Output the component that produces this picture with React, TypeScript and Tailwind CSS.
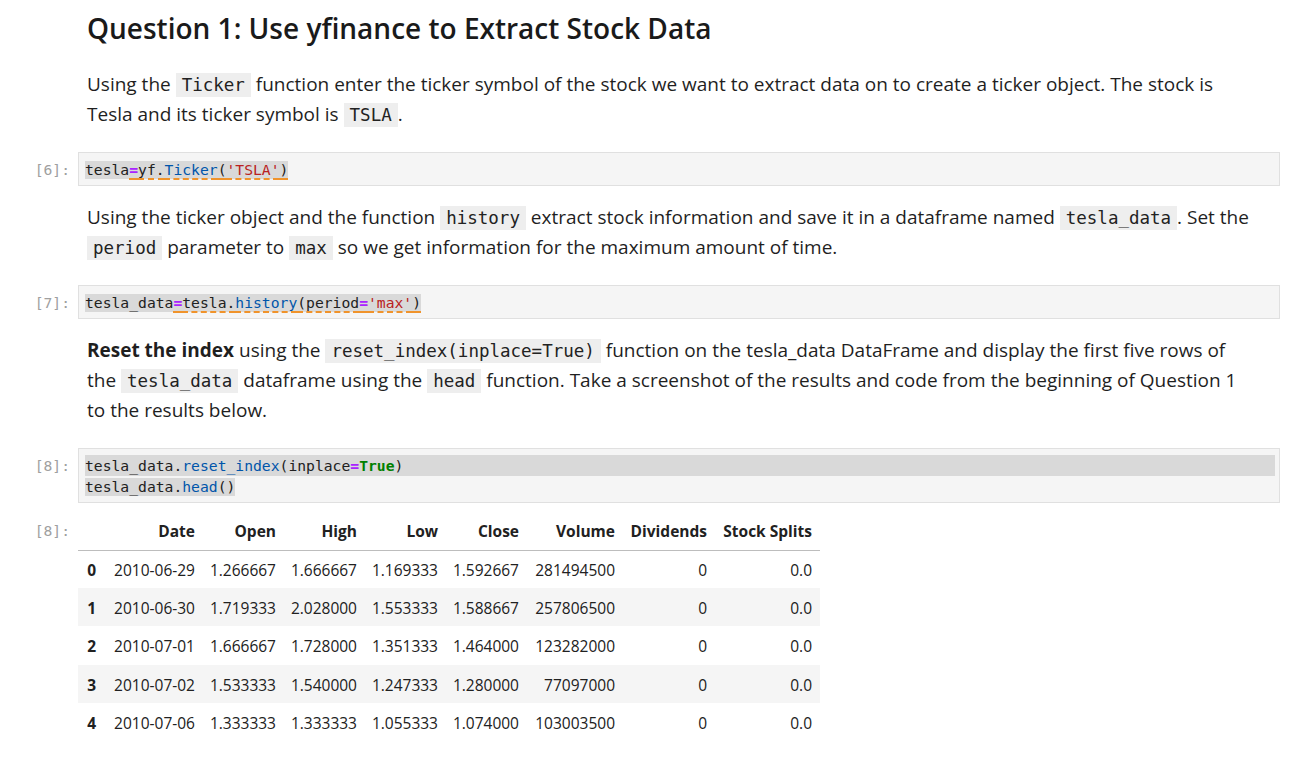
import React from "react";

const sans = "font-['Open_Sans',sans-serif]";
const mono = "font-['DejaVu_Sans_Mono',monospace]";

function IC({ children }: { children: React.ReactNode }) {
  return (
    <code className={`${mono} bg-[#eeeeee] px-[6px] py-[2px] text-[17.5px] leading-none text-[#222]`}>{children}</code>
  );
}

function U({ children }: { children: React.ReactNode }) {
  return (
    <span className="underline decoration-dashed decoration-[#f0932b] decoration-2 underline-offset-[3px]">{children}</span>
  );
}

const EQ = <span className="text-[#aa22ff] font-bold">=</span>;

function Line({ children }: { children: React.ReactNode }) {
  return <div className="h-[30px] overflow-visible whitespace-nowrap leading-[30px]">{children}</div>;
}

function Para({ children, mt }: { children: React.ReactNode; mt: string }) {
  return <div className={`${mt} pl-[87px] text-[19px] text-[#1f1f1f]`}>{children}</div>;
}

function Prompt({ n }: { n: number }) {
  return (
    <div className={`${mono} w-[78px] shrink-0 pr-[8px] text-right text-[14.7px] leading-[21px] text-[#a0a0a0]`}>
      [{n}]:
    </div>
  );
}

function CodeCell({ n, children }: { n: number; children: React.ReactNode }) {
  return (
    <div className="flex">
      <div className="pt-[7px]">
        <Prompt n={n} />
      </div>
      <div className={`${mono} mr-[10px] flex-1 border border-[#e0e0e0] bg-[#f5f5f5] pl-[6px] pr-[4px] pt-[6px] pb-[5px] text-[14.7px] leading-[21px] text-[#212121]`}>
        {children}
      </div>
    </div>
  );
}

const rows = [
  ["0", "2010-06-29", "1.266667", "1.666667", "1.169333", "1.592667", "281494500", "0", "0.0"],
  ["1", "2010-06-30", "1.719333", "2.028000", "1.553333", "1.588667", "257806500", "0", "0.0"],
  ["2", "2010-07-01", "1.666667", "1.728000", "1.351333", "1.464000", "123282000", "0", "0.0"],
  ["3", "2010-07-02", "1.533333", "1.540000", "1.247333", "1.280000", "77097000", "0", "0.0"],
  ["4", "2010-07-06", "1.333333", "1.333333", "1.055333", "1.074000", "103003500", "0", "0.0"],
];
const rowH = ["h-[38px]", "h-[38px]", "h-[39px]", "h-[38px]", "h-[39px]"];
const headers = ["", "Date", "Open", "High", "Low", "Close", "Volume", "Dividends", "Stock Splits"];
const widths = ["w-[26px]", "w-[99px]", "w-[81px]", "w-[81px]", "w-[81px]", "w-[81px]", "w-[96px]", "w-[92px]", "w-[105px]"];

export default function App() {
  return (
    <div className={`${sans} h-[761px] w-[1290px] overflow-hidden bg-white text-[#212121]`}>
      <div className="flex flex-col">
        {/* Heading */}
        <div className="mt-[8px] h-[40px] pl-[87px] text-[28px] font-semibold leading-[40px] text-[#1a1a1a]">
          Question 1: Use yfinance to Extract Stock Data
        </div>

        <Para mt="mt-[21px]">
          <Line>
            Using the <IC>Ticker</IC> function enter the ticker symbol of the stock we want to extract data on to create a ticker object. The stock is
          </Line>
          <Line>
            Tesla and its ticker symbol is <IC>TSLA</IC>.
          </Line>
        </Para>

        <div className="mt-[23px]">
          <CodeCell n={6}>
            <div className="h-[21px]">
              <span className="whitespace-pre bg-[#d9d9d9] pb-[1px]">
                tesla<U>{EQ}yf.<span className="text-[#0055aa]">Ticker</span>(<span className="text-[#ba2121]">'TSLA'</span>)</U>
              </span>
            </div>
          </CodeCell>
        </div>

        <Para mt="mt-[16px]">
          <Line>
            Using the ticker object and the function <IC>history</IC> extract stock information and save it in a dataframe named <IC>tesla_data</IC>. Set the
          </Line>
          <Line>
            <IC>period</IC> parameter to <IC>max</IC> so we get information for the maximum amount of time.
          </Line>
        </Para>

        <div className="mt-[23px]">
          <CodeCell n={7}>
            <div className="h-[21px]">
              <span className="whitespace-pre bg-[#d9d9d9] pb-[1px]">
                tesla_data<U>{EQ}tesla.<span className="text-[#0055aa]">history</span>(period{EQ}<span className="text-[#ba2121]">'max'</span>)</U>
              </span>
            </div>
          </CodeCell>
        </div>

        <Para mt="mt-[16px]">
          <Line>
            <b className="font-bold">Reset the index</b> using the <IC>reset_index(inplace=True)</IC> function on the tesla_data DataFrame and display the first five rows of
          </Line>
          <Line>
            the <IC>tesla_data</IC> dataframe using the <IC>head</IC> function. Take a screenshot of the results and code from the beginning of Question 1
          </Line>
          <Line>to the results below.</Line>
        </Para>

        <div className="mt-[23px]">
          <CodeCell n={8}>
            <div className="h-[21px] whitespace-pre bg-[#d9d9d9]">
              tesla_data.<span className="text-[#0055aa]">reset_index</span>(inplace{EQ}<span className="font-bold text-[#008000]">True</span>)
            </div>
            <div className="h-[21px]">
              <span className="whitespace-pre bg-[#d9d9d9] pb-[1px]">
                tesla_data.<span className="text-[#0055aa]">head</span>()
              </span>
            </div>
          </CodeCell>
        </div>

        {/* Output */}
        <div className="mt-[9px] flex">
          <div className="pt-[8px]">
            <Prompt n={8} />
          </div>
          <table className="border-collapse text-[15.5px] text-[#212121]">
            <thead>
              <tr className="border-b border-[#bdbdbd]">
                {headers.map((h, i) => (
                  <th key={i} className={`${widths[i]} h-[38px] p-0 pr-[8px] pt-[1px] text-right align-middle font-bold`}>
                    {h}
                  </th>
                ))}
              </tr>
            </thead>
            <tbody>
              {rows.map((r, ri) => (
                <tr key={ri} className={ri % 2 === 1 ? "bg-[#f5f5f5]" : "bg-white"}>
                  {r.map((c, ci) => (
                    <td
                      key={ci}
                      className={`${widths[ci]} ${rowH[ri]} p-0 pr-[8px] pt-[3px] text-right align-middle ${ci === 0 ? "font-bold" : ""}`}
                    >
                      {c}
                    </td>
                  ))}
                </tr>
              ))}
            </tbody>
          </table>
        </div>
      </div>
    </div>
  );
}
